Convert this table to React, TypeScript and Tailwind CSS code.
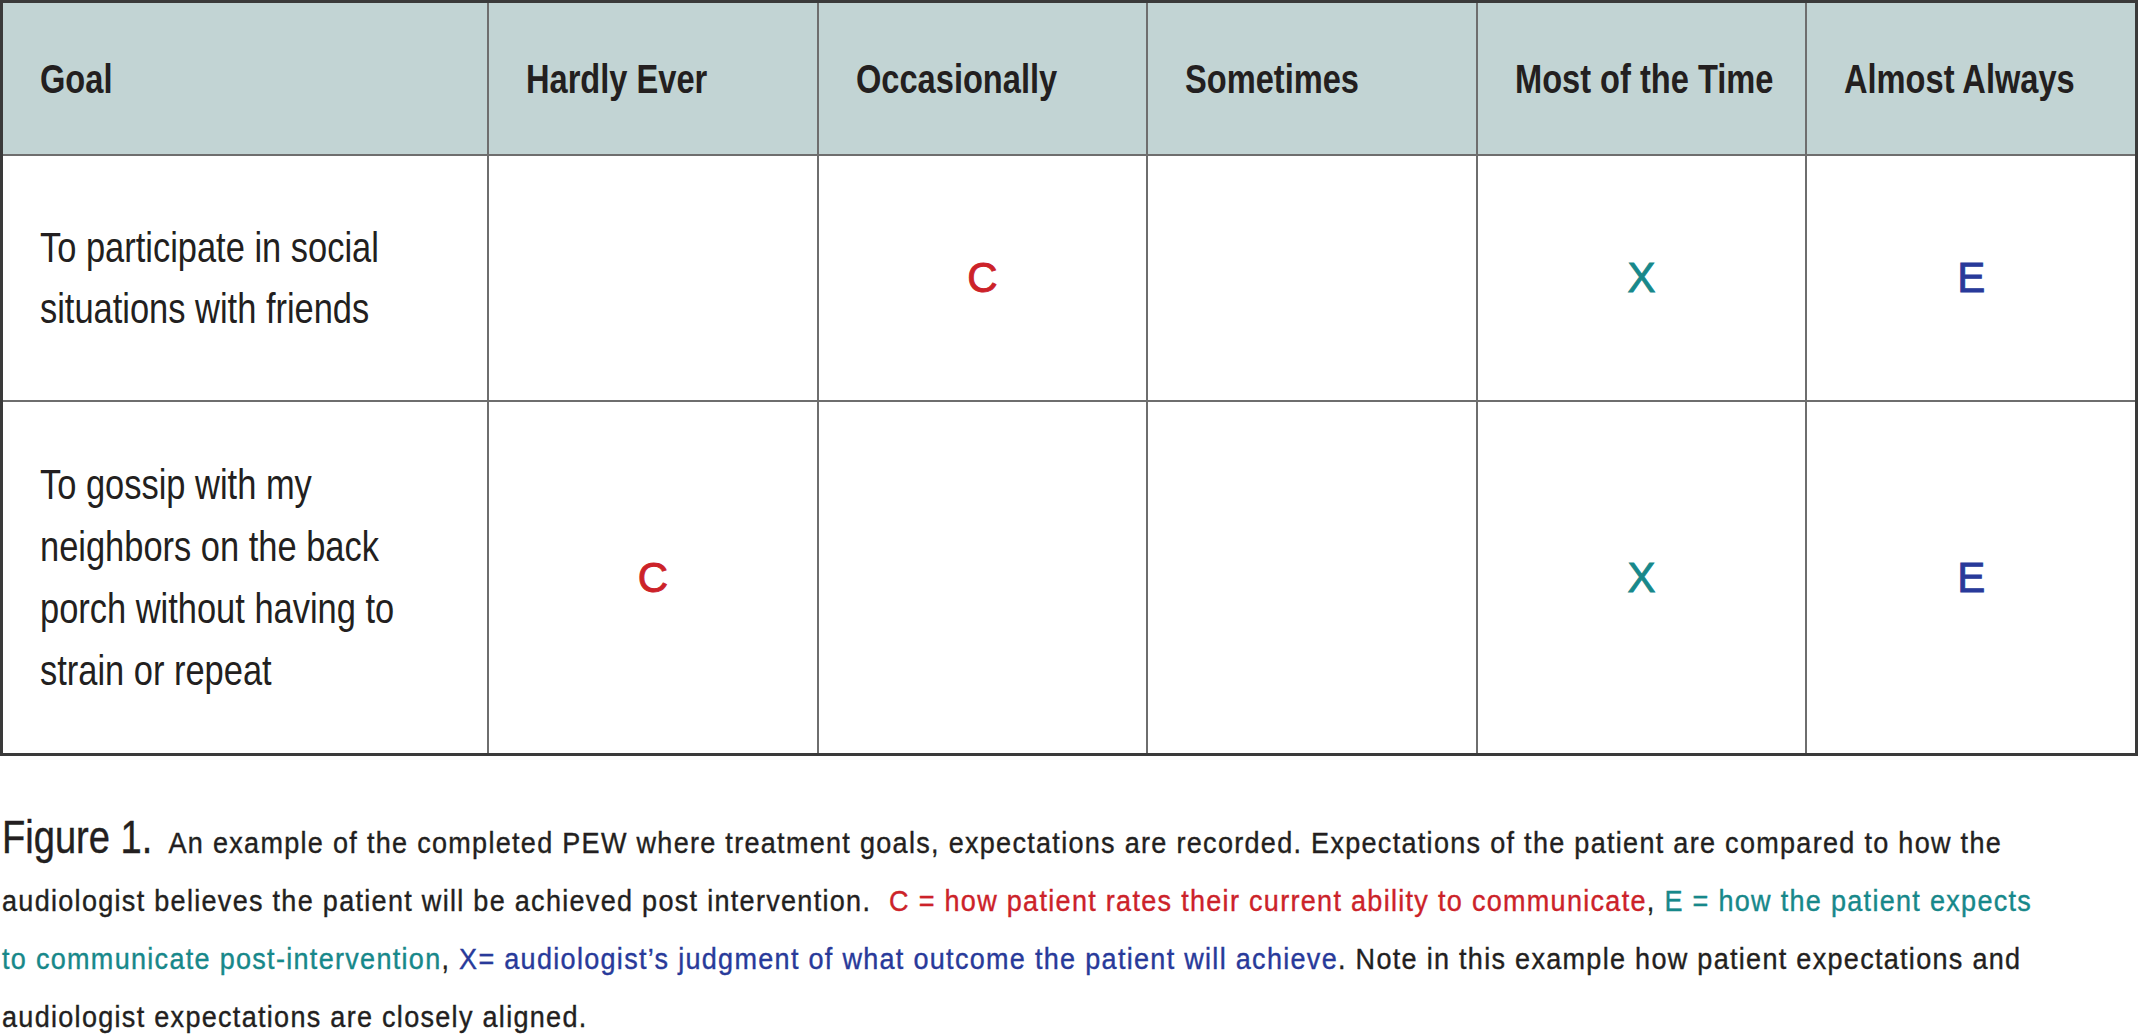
import React from "react";

const cols = ["Goal", "Hardly Ever", "Occasionally", "Sometimes", "Most of the Time", "Almost Always"];

const GRID = "grid grid-cols-[484px_repeat(5,minmax(0,1fr))]";

function Mark({ ch, color }: { ch: string; color: string }) {
  return (
    <div className={`flex items-center justify-center border-l-2 border-[#6e6e6e] ${color}`}>
      <span className="font-['Liberation_Sans',Arial,sans-serif] text-[42px] leading-none [-webkit-text-stroke:0.9px_currentColor]">
        {ch}
      </span>
    </div>
  );
}

function Empty() {
  return <div className="border-l-2 border-[#6e6e6e]" />;
}

export default function App() {
  return (
    <div className="min-h-screen w-[2139px] overflow-hidden bg-white font-['Liberation_Sans',Arial,sans-serif] text-[#231f20]">
      <div className="w-[2138px] border-[3px] border-[#3a3a3a]">
        {/* header */}
        <div className={`${GRID} h-[151px] bg-[#c2d4d4]`}>
          {cols.map((c, i) => (
            <div
              key={c}
              className={`flex min-w-0 items-center pl-[37px] text-[40px] font-bold ${i > 0 ? "border-l-2 border-[#6e6e6e]" : ""}`}
            >
              <span className="origin-left scale-x-[0.815] whitespace-nowrap">{c}</span>
            </div>
          ))}
        </div>
        {/* row 1 */}
        <div className={`${GRID} h-[246px] border-t-2 border-[#6e6e6e]`}>
          <div className="flex min-w-0 items-center pl-[37px] text-[42px] leading-[61px]">
            <div className="origin-left scale-x-[0.82] whitespace-nowrap">
              To participate in social
              <br />
              situations with friends
            </div>
          </div>
          <Empty />
          <Mark ch="C" color="text-[#cc2229]" />
          <Empty />
          <Mark ch="X" color="text-[#17888a]" />
          <Mark ch="E" color="text-[#283a9a]" />
        </div>
        {/* row 2 */}
        <div className={`${GRID} h-[353px] border-t-2 border-[#6e6e6e]`}>
          <div className="flex min-w-0 items-center pl-[37px] text-[42px] leading-[62px]">
            <div className="origin-left scale-x-[0.82] whitespace-nowrap">
              To gossip with my
              <br />
              neighbors on the back
              <br />
              porch without having to
              <br />
              strain or repeat
            </div>
          </div>
          <Mark ch="C" color="text-[#cc2229]" />
          <Empty />
          <Empty />
          <Mark ch="X" color="text-[#17888a]" />
          <Mark ch="E" color="text-[#283a9a]" />
        </div>
      </div>

      {/* caption */}
      <div className="mt-[58px] pl-[2px] text-[30px] leading-[58px] tracking-[1.45px] [-webkit-text-stroke:0.4px_currentColor]">
        <div className="origin-left scale-x-[0.9] whitespace-nowrap">
          <span className="mr-[-14.5px] inline-block origin-left scale-x-[0.92] text-[46px] leading-none tracking-normal">
            Figure 1.
          </span>
          <span className="ml-[18px]">
            An example of the completed PEW where treatment goals, expectations are recorded. Expectations of the patient are compared to how the
          </span>
        </div>
        <div className="origin-left scale-x-[0.9] whitespace-nowrap">
          audiologist believes the patient will be achieved post intervention.{" "}
          <span className="ml-[10px] text-[#cc2229]">C = how patient rates their current ability to communicate</span>,{" "}
          <span className="text-[#17888a]">E = how the patient expects</span>
        </div>
        <div className="origin-left scale-x-[0.9] whitespace-nowrap">
          <span className="text-[#17888a]">to communicate post-intervention</span>,{" "}
          <span className="text-[#283a9a]">X= audiologist’s judgment of what outcome the patient will achieve</span>. Note in this example how patient expectations and
        </div>
        <div className="origin-left scale-x-[0.9] whitespace-nowrap">audiologist expectations are closely aligned.</div>
      </div>
    </div>
  );
}
